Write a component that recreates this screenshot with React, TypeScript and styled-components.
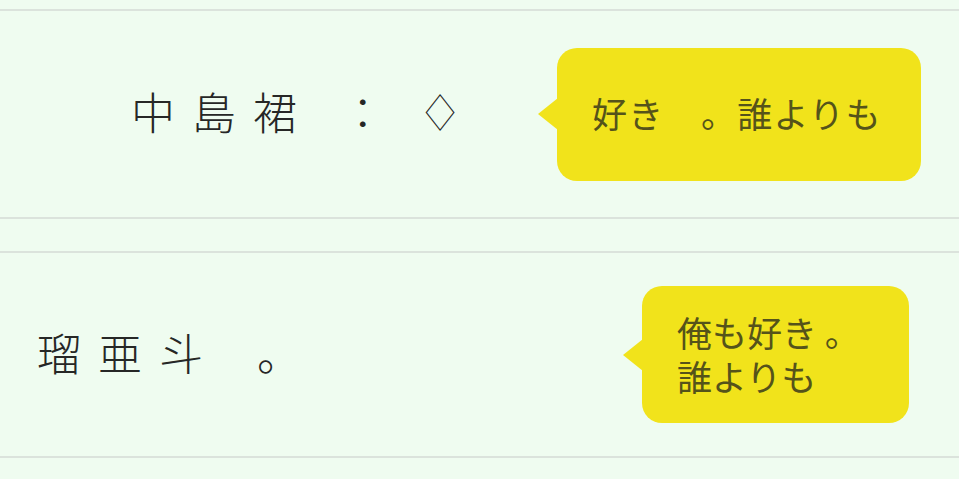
import styled, { createGlobalStyle } from "styled-components";

const GlobalStyle = createGlobalStyle`
  html, body {
    margin: 0;
    padding: 0;
    background: #effcf0;
  }
  body {
    font-family: "Noto Sans CJK JP", "Noto Sans", sans-serif;
  }
`;

export const StyledThread = styled.div`
  display: flex;
  flex-direction: column;
  gap: 32px;
  width: 959px;
  height: 479px;
  padding-top: 9px;
  box-sizing: border-box;
  overflow: hidden;
`;

export const StyledRow = styled.div<{ $left: number; $right: number; $height: number }>`
  display: flex;
  align-items: center;
  height: ${(p) => p.$height}px;
  padding: 0 ${(p) => p.$right}px 0 ${(p) => p.$left}px;
  border-top: 2px solid #dbe3dc;
  border-bottom: 2px solid #dbe3dc;
  background: #effcf0;
`;

export const StyledName = styled.div`
  display: flex;
  align-items: center;
  font-size: 44px;
  font-weight: 300;
  letter-spacing: 17px;
  color: #262726;
  white-space: pre;
  line-height: 1;
  margin-top: -6px;
`;

// trailing mark after the name (a diamond or a full stop)
export const StyledMark = styled.span<{ $shift: number; $size: number; $narrow?: boolean }>`
  display: inline-block;
  margin-left: ${(p) => p.$shift}px;
  font-size: ${(p) => p.$size}px;
  letter-spacing: 0;
  transform: ${(p) => (p.$narrow ? "scaleX(0.78)" : "none")};
`;

export const StyledBubble = styled.div<{ $width: number; $height: number; $spacing: number }>`
  position: relative;
  margin-left: auto;
  width: ${(p) => p.$width}px;
  height: ${(p) => p.$height}px;
  box-sizing: border-box;
  padding: 0 20px 2px 35px;
  display: flex;
  align-items: center;
  background: #f1e31b;
  border-radius: 20px;
  color: #55531a;
  font-size: 35px;
  letter-spacing: ${(p) => p.$spacing}px;
  line-height: 44px;
  white-space: pre;

  &::before {
    content: "";
    position: absolute;
    left: -19px;
    top: 50%;
    margin-top: -16px;
    border-style: solid;
    border-width: 16px 20px 16px 0;
    border-color: transparent #f1e31b transparent transparent;
  }
`;

type Message = {
  name: string;
  mark: string;
  markShift: number;
  markSize: number;
  narrow?: boolean;
  text: string;
  spacing: number;
  left: number;
  right: number;
  height: number;
  bubbleWidth: number;
  bubbleHeight: number;
};

const messages: Message[] = [
  {
    name: "中島裙 ：",
    mark: "◇",
    markShift: 19,
    markSize: 38,
    narrow: true,
    text: "好き　。誰よりも",
    spacing: 1.3,
    left: 131,
    right: 38,
    height: 206,
    bubbleWidth: 364,
    bubbleHeight: 133,
  },
  {
    name: "瑠亜斗",
    mark: "。",
    markShift: 37,
    markSize: 44,
    text: "俺も好き 。\n誰よりも",
    spacing: 0,
    left: 37,
    right: 50,
    height: 203,
    bubbleWidth: 267,
    bubbleHeight: 137,
  },
];

function App() {
  return (
    <>
      <GlobalStyle />
      <StyledThread>
        {messages.map((m) => (
          <StyledRow key={m.name} $left={m.left} $right={m.right} $height={m.height}>
            <StyledName>
              {m.name}
              <StyledMark $shift={m.markShift} $size={m.markSize} $narrow={m.narrow}>
                {m.mark}
              </StyledMark>
            </StyledName>
            <StyledBubble $width={m.bubbleWidth} $height={m.bubbleHeight} $spacing={m.spacing}>
              {m.text}
            </StyledBubble>
          </StyledRow>
        ))}
      </StyledThread>
    </>
  );
}

export default App;
